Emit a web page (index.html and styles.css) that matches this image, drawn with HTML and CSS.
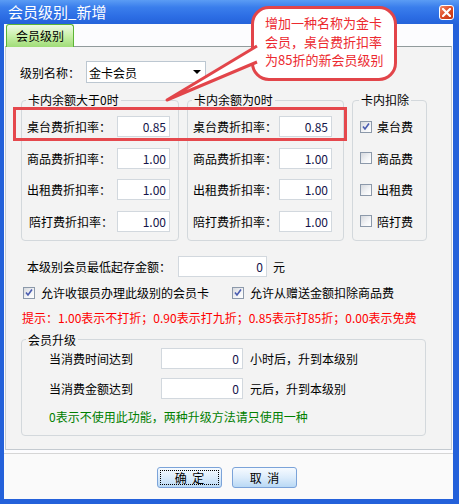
FILE: index.html
```html
<!DOCTYPE html>
<html lang="zh-CN">

<head>
    <meta charset="UTF-8">
    <title>会员级别_新增</title>
    <link rel="stylesheet" href="styles.css">
</head>

<body>
    <div class="window">
        <div class="titlebar">
            <span class="title">会员级别_新增</span>
            <span class="close-btn">
                <svg width="9" height="9" viewBox="0 0 9 9">
                    <path d="M1 1 L8 8 M8 1 L1 8" stroke="#fff" stroke-width="2.2" stroke-linecap="square" />
                </svg>
            </span>
        </div>

        <div class="client">
            <div class="tabs">
                <div class="tab">会员级别</div>
            </div>

            <div class="panel">
                <div class="name-row">
                    <span class="name-label">级别名称：</span>
                    <div class="combo"><span>金卡会员</span><i class="combo-arrow"></i></div>
                </div>

                <div class="groups">
                    <fieldset class="group group-pos">
                        <legend>卡内余额大于0时</legend>
                        <div class="rate-list">
                            <div class="rate-row"><span class="rate-label">桌台费折扣率：</span><span class="field">0.85</span></div>
                            <div class="rate-row"><span class="rate-label">商品费折扣率：</span><span class="field">1.00</span></div>
                            <div class="rate-row"><span class="rate-label">出租费折扣率：</span><span class="field">1.00</span></div>
                            <div class="rate-row"><span class="rate-label indent">陪打费折扣率：</span><span class="field">1.00</span></div>
                        </div>
                    </fieldset>

                    <fieldset class="group group-zero">
                        <legend>卡内余额为0时</legend>
                        <div class="rate-list">
                            <div class="rate-row"><span class="rate-label">桌台费折扣率：</span><span class="field">0.85</span></div>
                            <div class="rate-row"><span class="rate-label">商品费折扣率：</span><span class="field">1.00</span></div>
                            <div class="rate-row"><span class="rate-label">出租费折扣率：</span><span class="field">1.00</span></div>
                            <div class="rate-row"><span class="rate-label">陪打费折扣率：</span><span class="field">1.00</span></div>
                        </div>
                    </fieldset>

                    <fieldset class="group group-deduct">
                        <legend>卡内扣除</legend>
                        <div class="rate-list">
                            <div class="rate-row check-row">
                                <span class="check"><svg width="10" height="10" viewBox="0 0 10 10"><path d="M2 4.5 L4 7 L8 1.5" fill="none" stroke="#4a5cb0" stroke-width="1.6" /></svg></span>桌台费
                            </div>
                            <div class="rate-row check-row"><span class="check"></span>商品费</div>
                            <div class="rate-row check-row"><span class="check"></span>出租费</div>
                            <div class="rate-row check-row"><span class="check"></span>陪打费</div>
                        </div>
                    </fieldset>
                </div>

                <div class="min-row">
                    <span class="min-label">本级别会员最低起存金额：</span>
                    <span class="field field-wide">0</span>
                    <span class="unit">元</span>
                </div>

                <div class="options-row">
                    <div class="option option-first">
                        <span class="check"><svg width="10" height="10" viewBox="0 0 10 10"><path d="M2 4.5 L4 7 L8 1.5" fill="none" stroke="#4a5cb0" stroke-width="1.6" /></svg></span>允许收银员办理此级别的会员卡
                    </div>
                    <div class="option">
                        <span class="check"><svg width="10" height="10" viewBox="0 0 10 10"><path d="M2 4.5 L4 7 L8 1.5" fill="none" stroke="#4a5cb0" stroke-width="1.6" /></svg></span>允许从赠送金额扣除商品费
                    </div>
                </div>

                <p class="hint">提示：1.00表示不打折；0.90表示打九折；0.85表示打85折；0.00表示免费</p>

                <fieldset class="upgrade">
                    <legend>会员升级</legend>
                    <div class="up-row">
                        <span class="up-label">当消费时间达到</span>
                        <span class="field field-up">0</span>
                        <span class="unit">小时后，升到本级别</span>
                    </div>
                    <div class="up-row">
                        <span class="up-label">当消费金额达到</span>
                        <span class="field field-up">0</span>
                        <span class="unit">元后，升到本级别</span>
                    </div>
                    <p class="note">0表示不使用此功能，两种升级方法请只使用一种</p>
                </fieldset>
            </div>

            <div class="footer">
                <div class="btn"><span class="focus">确 定</span></div>
                <div class="btn"><span class="caption">取 消</span></div>
            </div>
        </div>

        <!-- annotation drawn over the dialog -->
        <div class="overlay">
            <div class="highlight"></div>
            <div class="callout">增加一种名称为金卡<br>会员，桌台费折扣率<br>为85折的新会员级别</div>
            <svg class="tail" width="459" height="504" viewBox="0 0 459 504">
                <path d="M257 46 L167 100 L257 62" fill="#fff" stroke="#e2454a" stroke-width="3" stroke-linejoin="round" />
            </svg>
        </div>
    </div>
</body>

</html>
```

FILE: styles.css
```css
body {
    margin: 0;
    font-family: "Noto Sans CJK SC", "Liberation Sans", sans-serif;
    font-size: 12px;
    color: #000;
}

.window {
    position: relative;
    width: 459px;
    height: 504px;
    display: flex;
    flex-direction: column;
    background-color: #2461da;
}

/* title bar */
.titlebar {
    height: 24px;
    box-sizing: border-box;
    display: flex;
    align-items: center;
    justify-content: space-between;
    padding: 0 5px 0 8px;
    background: linear-gradient(#5b9cf4 0%, #3a7eec 30%, #2c6de4 70%, #2563da 100%);
    color: #fff;
}

.title {
    font-size: 15px;
    line-height: 18px;
}

.close-btn {
    width: 15px;
    height: 15px;
    box-sizing: border-box;
    border: 1px solid #fff;
    border-radius: 3px;
    background: linear-gradient(135deg, #f08a6a, #dd4a24 50%, #c23412);
    display: flex;
    align-items: center;
    justify-content: center;
}

/* client area */
.client {
    flex: 1;
    margin: 0 6px 5px 4px;
    background-color: #fcfcfe;
    display: flex;
    flex-direction: column;
}

.tabs {
    height: 22px;
    display: flex;
    align-items: flex-end;
    padding-left: 2px;
}

.tab {
    position: relative;
    width: 68px;
    height: 23px;
    box-sizing: border-box;
    margin-bottom: -1px;
    border: 1px solid #5cb536;
    border-bottom: none;
    border-radius: 3px 3px 0 0;
    background: linear-gradient(#effbe6, #c8f0a8 50%, #a0dc78);
    text-align: center;
    line-height: 22px;
}

.panel {
    height: 404px;
    box-sizing: border-box;
    margin: 0 1px;
    padding: 14px 0 0 15px;
    border: 1px solid #c4cad0;
    border-top-color: #919b9c;
    background-color: #f3f3f3;
}

.name-row {
    display: flex;
    align-items: center;
    height: 22px;
}

.name-label {
    width: 66px;
    margin-left: -1px;
}

.combo {
    width: 120px;
    height: 22px;
    box-sizing: border-box;
    display: flex;
    align-items: center;
    justify-content: space-between;
    padding: 0 4px 0 2px;
    border: 1px solid #bcc7d1;
    background-color: #fff;
}

.combo-arrow {
    width: 0;
    height: 0;
    border-left: 4px solid transparent;
    border-right: 4px solid transparent;
    border-top: 4px solid #000;
}

/* group boxes */
.groups {
    display: flex;
    gap: 8px;
    margin-top: 10px;
}

fieldset {
    margin: 0;
    min-width: 0;
    box-sizing: border-box;
    border: 1px solid #d3d8dc;
    border-radius: 4px;
}

legend {
    padding: 0 2px;
    line-height: 14px;
}

.group {
    padding: 9px 0 8px 5px;
}

.group legend {
    margin-left: -1px;
}

.group-pos {
    width: 158px;
}

.group-zero {
    width: 157px;
}

.group-deduct {
    width: 75px;
    padding-left: 7px;
}

.rate-list {
    display: flex;
    flex-direction: column;
    gap: 10.5px;
}

.rate-row {
    display: flex;
    align-items: center;
    height: 21px;
}

.group-pos .rate-label {
    width: 90px;
}

.group-zero .rate-label {
    width: 86px;
}

.rate-label.indent {
    padding-left: 2px;
    width: 88px;
}

.field {
    width: 53px;
    height: 21px;
    box-sizing: border-box;
    padding-right: 3px;
    border: 1px solid #d2d8de;
    background-color: #fff;
    text-align: right;
    line-height: 19px;
    color: #14144a;
}

.check-row {
    gap: 5px;
}

.check {
    width: 12px;
    height: 12px;
    box-sizing: border-box;
    display: flex;
    align-items: center;
    justify-content: center;
    border: 1px solid #8c99aa;
    background: linear-gradient(135deg, #d6d9de, #f4f5f7 60%, #fff);
}

/* lower section */
.min-row {
    display: flex;
    align-items: center;
    height: 21px;
    margin-top: 15px;
    padding-left: 6px;
}

.min-label {
    width: 151px;
}

.field-wide {
    width: 89px;
}

.unit {
    margin-left: 6px;
}

.options-row {
    display: flex;
    align-items: center;
    height: 16px;
    margin-top: 8px;
    padding-left: 2px;
}

.option {
    display: flex;
    align-items: center;
    gap: 6px;
}

.option-first {
    width: 209px;
}

.hint {
    margin: 9px 0 0 1px;
    line-height: 16px;
    color: #f00;
}

.upgrade {
    width: 405px;
    margin-top: 7px;
    padding: 1px 0 10px 27px;
}

.upgrade legend {
    margin-left: -23px;
}

.up-row {
    display: flex;
    align-items: center;
    height: 21px;
}

.up-row + .up-row {
    margin-top: 9px;
}

.up-label {
    width: 112px;
}

.field-up {
    width: 82px;
}

.up-row .unit {
    margin-left: 7px;
}

.note {
    margin: 10px 0 0;
    line-height: 16px;
    color: #008000;
}

/* buttons */
.footer {
    flex: 1;
    margin-top: 3px;
    display: flex;
    justify-content: center;
    gap: 10px;
    padding: 13px 3px 0 0;
    border-top: 1px solid #d6d6d6;
    background-color: #fafafa;
}

.btn {
    width: 65px;
    height: 21px;
    box-sizing: border-box;
    display: flex;
    align-items: center;
    justify-content: center;
    border: 1px solid #7ba3d9;
    border-radius: 3px;
    background: linear-gradient(#f6faff, #dcecfb 50%, #b9d9f5);
    word-spacing: 3px;
}

.focus {
    width: 59px;
    height: 15px;
    box-sizing: border-box;
    border: 1px dotted #000;
    text-align: center;
    line-height: 13px;
}

/* annotation */
.overlay {
    position: absolute;
    inset: 0;
    pointer-events: none;
}

.highlight {
    position: absolute;
    left: 13px;
    top: 107px;
    width: 334px;
    height: 34px;
    box-sizing: border-box;
    border: 3px solid #e5484d;
}

.callout {
    position: absolute;
    left: 251px;
    top: 6px;
    width: 146px;
    height: 75px;
    box-sizing: border-box;
    padding: 5px 0 0 11px;
    border: 3px solid #e2454a;
    border-radius: 18px;
    background-color: #fff;
    color: #ec2a30;
    font-size: 13px;
    line-height: 18.5px;
}

.tail {
    position: absolute;
    left: 0;
    top: 0;
}
```
